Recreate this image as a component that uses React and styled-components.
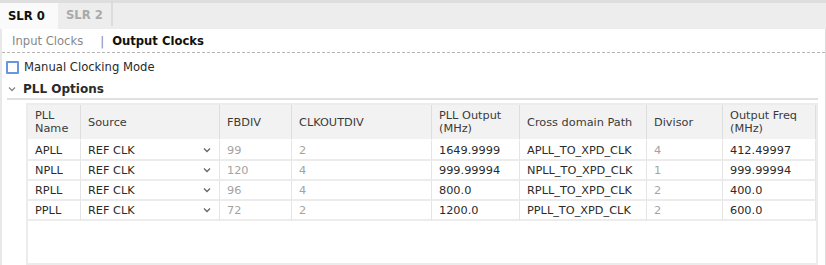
import styled, { createGlobalStyle } from 'styled-components';

const Global = createGlobalStyle`
  body { margin: 0; background: #fff; font-family: "DejaVu Sans", Verdana, sans-serif; color: #2a2a2a; }
`;

const Page = styled.div`
  width: 826px;
  height: 265px;
  overflow: hidden;
  display: flex;
  flex-direction: column;
`;

const TabBar = styled.div`
  height: 26px;
  border-top: 3px solid #dedede;
  background: #ededed;
  display: flex;
  align-items: stretch;
`;

const Tab = styled.div`
  padding: 0 8px;
  display: flex;
  align-items: center;
  font-size: 11.6px;
  font-weight: bold;
  color: ${p => (p.active ? '#111' : '#aaa')};
  background: ${p => (p.active ? '#fafafa' : 'transparent')};
  border-right: ${p => (p.sep ? '2px solid #dcdcdc' : 'none')};
  margin-bottom: ${p => (p.sep ? '3px' : '0')};
  min-width: ${p => (p.active ? '42px' : 'auto')};
`;

const Body = styled.div`
  flex: 1;
  border-left: 2px solid #e8e8e8;
  border-right: 1px solid #dcdcdc;
  display: flex;
  flex-direction: column;
`;

const SubTabs = styled.div`
  height: 23px;
  display: flex;
  align-items: center;
  padding-left: 10px;
  border-bottom: 1px dashed #b4b4b4;
  font-size: 11.6px;
`;

const SubTab = styled.span`
  color: ${p => (p.active ? '#111' : '#888')};
  font-weight: ${p => (p.active ? 'bold' : 'normal')};
`;

const Pipe = styled.span`
  color: #888;
  margin: 0 8px 0 17px;
`;

const CheckRow = styled.label`
  display: flex;
  align-items: center;
  gap: 5px;
  margin: 7px 0 0 4px;
  font-size: 11.6px;
  color: #2a2a2a;
`;

const Box = styled.span`
  box-sizing: border-box;
  width: 13px;
  height: 13px;
  border: 2px solid #6a96de;
  border-radius: 1px;
  background: #fff;
`;

const Section = styled.div`
  margin: 5px 7px 0 5px;
  display: flex;
  align-items: center;
  gap: 6px;
  height: 19px;
  border-bottom: 2px solid #e0e0e0;
  font-size: 12px;
  font-weight: bold;
`;

const TableWrap = styled.div`
  margin: 3px 7px 0 24px;
  flex: 1;
  background: #ececec;
  padding: 2px;
  display: flex;
`;

const Grid = styled.div`
  flex: 1;
  background: #fff;
  display: grid;
  grid-template-columns: 53px 139px 72px 140px 88px 127px 76px 1fr;
  grid-auto-rows: 20px;
  grid-template-rows: 36px;
  align-content: start;
  font-size: 11.3px;
`;

const Head = styled.div`
  background: #f2f2f2;
  border-right: 1px solid #dedede;
  border-bottom: 2px solid #fff;
  padding: 0 7px;
  display: flex;
  align-items: center;
  line-height: 13px;
  color: #3a3a3a;
  &:last-child { border-right: none; }
`;

const Cell = styled.div`
  border-right: 1px solid #e4e4e4;
  border-bottom: 2px solid #ececec;
  padding: 0 7px;
  display: flex;
  align-items: center;
  justify-content: space-between;
  color: ${p => (p.dim ? '#a3a3a3' : '#2a2a2a')};
  font-size: 11.3px;
`;

const Chevron = ({ size = 10, color = '#666' }) => (
  <svg width={size} height={size} viewBox="0 0 10 10">
    <path d="M2 3.5 L5 6.5 L8 3.5" fill="none" stroke={color} strokeWidth="1.3" />
  </svg>
);

const rows = [
  ['APLL', '99', '2', '1649.9999', 'APLL_TO_XPD_CLK', '4', '412.49997'],
  ['NPLL', '120', '4', '999.99994', 'NPLL_TO_XPD_CLK', '1', '999.99994'],
  ['RPLL', '96', '4', '800.0', 'RPLL_TO_XPD_CLK', '2', '400.0'],
  ['PPLL', '72', '2', '1200.0', 'PPLL_TO_XPD_CLK', '2', '600.0'],
];

export default function App() {
  return (
    <Page>
      <Global />
      <TabBar>
        <Tab active>SLR 0</Tab>
        <Tab sep>SLR 2</Tab>
      </TabBar>
      <Body>
        <SubTabs>
          <SubTab>Input Clocks</SubTab>
          <Pipe>|</Pipe>
          <SubTab active>Output Clocks</SubTab>
        </SubTabs>
        <CheckRow>
          <Box />
          Manual Clocking Mode
        </CheckRow>
        <Section>
          <Chevron size={10} color="#888" />
          PLL Options
        </Section>
        <TableWrap>
          <Grid>
            <Head>PLL<br />Name</Head>
            <Head>Source</Head>
            <Head>FBDIV</Head>
            <Head>CLKOUTDIV</Head>
            <Head>PLL Output<br />(MHz)</Head>
            <Head>Cross domain Path</Head>
            <Head>Divisor</Head>
            <Head>Output Freq<br />(MHz)</Head>
            {rows.map(r => [
              <Cell key={r[0] + 'n'}>{r[0]}</Cell>,
              <Cell key={r[0] + 's'}>REF CLK<Chevron /></Cell>,
              <Cell key={r[0] + 'f'} dim>{r[1]}</Cell>,
              <Cell key={r[0] + 'c'} dim>{r[2]}</Cell>,
              <Cell key={r[0] + 'o'}>{r[3]}</Cell>,
              <Cell key={r[0] + 'x'}>{r[4]}</Cell>,
              <Cell key={r[0] + 'd'} dim>{r[5]}</Cell>,
              <Cell key={r[0] + 'q'}>{r[6]}</Cell>,
            ])}
          </Grid>
        </TableWrap>
      </Body>
    </Page>
  );
}
